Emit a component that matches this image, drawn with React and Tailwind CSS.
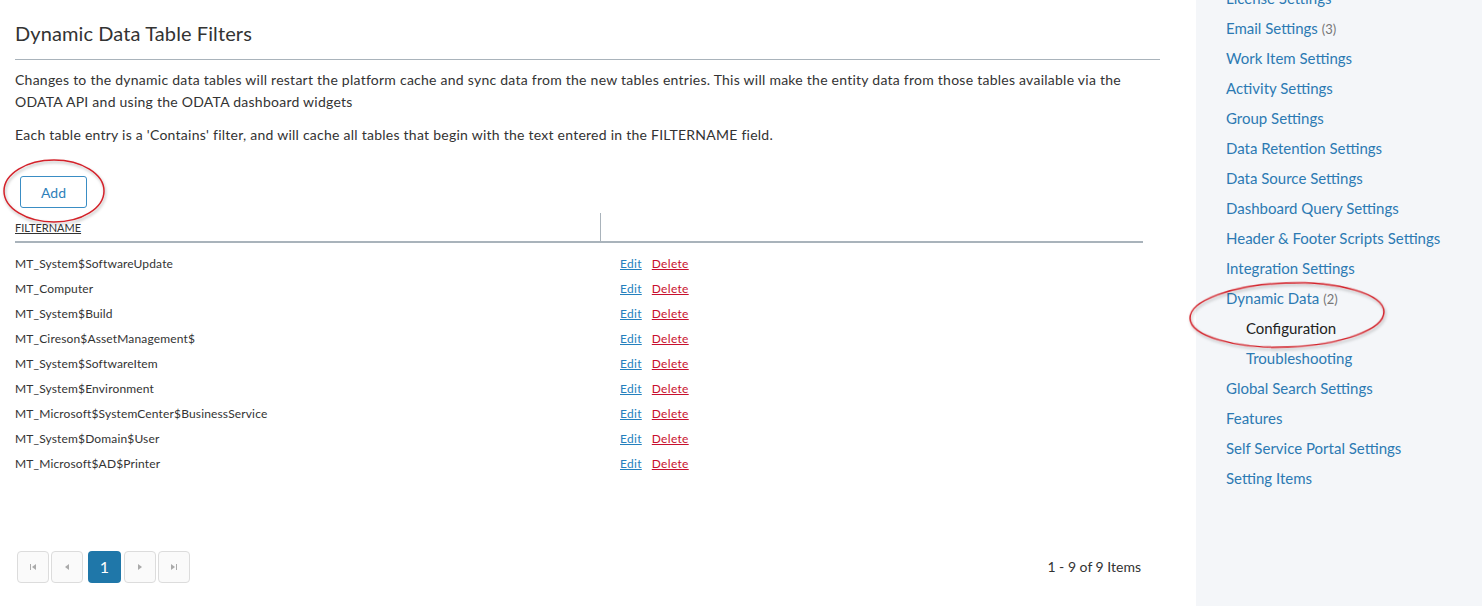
import React from "react";

const rows = [
  "MT_System$SoftwareUpdate",
  "MT_Computer",
  "MT_System$Build",
  "MT_Cireson$AssetManagement$",
  "MT_System$SoftwareItem",
  "MT_System$Environment",
  "MT_Microsoft$SystemCenter$BusinessService",
  "MT_System$Domain$User",
  "MT_Microsoft$AD$Printer",
];

const nav = [
  { label: "License Settings" },
  { label: "Email Settings", count: "(3)" },
  { label: "Work Item Settings" },
  { label: "Activity Settings" },
  { label: "Group Settings" },
  { label: "Data Retention Settings" },
  { label: "Data Source Settings" },
  { label: "Dashboard Query Settings" },
  { label: "Header & Footer Scripts Settings" },
  { label: "Integration Settings" },
  { label: "Dynamic Data", count: "(2)" },
  { label: "Configuration", sub: true, active: true },
  { label: "Troubleshooting", sub: true },
  { label: "Global Search Settings" },
  { label: "Features" },
  { label: "Self Service Portal Settings" },
  { label: "Setting Items" },
];

function PagerBtn({ children }) {
  return (
    <div className="w-[32px] h-[32px] border border-[#dcdcdc] rounded-[4px] bg-[#fafafa] flex items-center justify-center">
      {children}
    </div>
  );
}

export default function App() {
  return (
    <div
      className="relative w-[1482px] h-[606px] overflow-hidden bg-white flex"
      style={{ fontFamily: "Lato, 'Noto Sans', sans-serif" }}
    >
      {/* main */}
      <div className="w-[1196px] shrink-0 pl-[15px] pr-[36px] text-[#333]">
        <div className="pt-[21px] pb-[14px] border-b border-[#a9b3bb]">
          <h1 className="text-[20px] leading-[24px] text-[#333] tracking-[0.1px]">Dynamic Data Table Filters</h1>
        </div>
        <p className="mt-[9px] text-[14px] leading-[22px] tracking-[0.25px] w-[1128px]">
          Changes to the dynamic data tables will restart the platform cache and sync data from the new tables entries. This will make the entity data from those tables available via the ODATA API and using the ODATA dashboard widgets
        </p>
        <p className="mt-[11px] text-[14px] leading-[22px] tracking-[0.25px]">
          Each table entry is a 'Contains' filter, and will cache all tables that begin with the text entered in the FILTERNAME field.
        </p>
        <button className="mt-[30px] ml-[5px] w-[67px] h-[32px] border border-[#3a8dc4] rounded-[3px] text-[#2e7fba] text-[14px] bg-white">
          Add
        </button>
        <div className="w-[1128px]">
          <div className="mt-[5px] h-[30px] flex border-b-2 border-[#a9b3bb]">
            <div className="w-[586px] border-r border-[#a9b3bb] flex items-center pt-[2px]">
              <span className="text-[11px] underline text-[#333]">FILTERNAME</span>
            </div>
            <div className="flex-1"></div>
          </div>
          <div className="pt-[8px]">
            {rows.map((r) => (
              <div key={r} className="h-[25px] flex items-center text-[12px] tracking-[0.15px]">
                <div className="w-[605px] text-[#333]">{r}</div>
                <a className="text-[#2580bd] underline tracking-[0.3px]">Edit</a>
                <a className="ml-[10px] text-[#c8102e] underline tracking-[0.3px]">Delete</a>
              </div>
            ))}
          </div>
        </div>
        <div className="mt-[75px] w-[1128px] flex items-center justify-between">
          <div className="flex items-center ml-[2px]">
            <PagerBtn>
              <svg width="10" height="10" viewBox="0 0 10 10"><rect x="2" y="2" width="1" height="6" fill="#aaa" /><path d="M8 2 L4 5 L8 8 Z" fill="#aaa" /></svg>
            </PagerBtn>
            <div className="ml-[2px]">
              <PagerBtn>
                <svg width="10" height="10" viewBox="0 0 10 10"><path d="M7 2 L3 5 L7 8 Z" fill="#aaa" /></svg>
              </PagerBtn>
            </div>
            <div className="ml-[5px] w-[33px] h-[32px] rounded-[4px] bg-[#1f77a9] text-white text-[16px] flex items-center justify-center">1</div>
            <div className="ml-[3px]">
              <PagerBtn>
                <svg width="10" height="10" viewBox="0 0 10 10"><path d="M3 2 L7 5 L3 8 Z" fill="#aaa" /></svg>
              </PagerBtn>
            </div>
            <div className="ml-[2px]">
              <PagerBtn>
                <svg width="10" height="10" viewBox="0 0 10 10"><path d="M2 2 L6 5 L2 8 Z" fill="#aaa" /><rect x="7" y="2" width="1" height="6" fill="#aaa" /></svg>
              </PagerBtn>
            </div>
          </div>
          <div className="text-[14px] text-[#333] mr-[2px] -mt-[2px]">1 - 9 of 9 Items</div>
        </div>
      </div>

      {/* sidebar */}
      <div className="flex-1 bg-[#f4f6f9] pl-[30px]">
        <div className="-mt-[17px] flex flex-col">
          {nav.map((n) => (
            <div
              key={n.label}
              className={`h-[30px] leading-[30px] text-[15px] ${n.sub ? "pl-[20px]" : ""} ${n.active ? "text-[#222]" : "text-[#2c7ab3]"}`}
            >
              {n.label}
              {n.count && <span className="ml-[4px] text-[13px] text-[#777]">{n.count}</span>}
            </div>
          ))}
        </div>
      </div>

      {/* annotation ellipses */}
      <svg className="absolute left-0 top-0 pointer-events-none" width="1482" height="606">
        <defs>
          <filter id="sh" x="-20%" y="-20%" width="140%" height="140%">
            <feDropShadow dx="1" dy="2" stdDeviation="1.5" floodColor="#000" floodOpacity="0.3" />
          </filter>
        </defs>
        <ellipse cx="54" cy="191" rx="50" ry="31" fill="none" stroke="#d3222a" strokeWidth="1.5" filter="url(#sh)" />
        <ellipse cx="1287" cy="315" rx="97" ry="32" fill="none" stroke="#d3222a" strokeWidth="1.5" transform="rotate(-2 1287 315)" filter="url(#sh)" />
      </svg>
    </div>
  );
}
